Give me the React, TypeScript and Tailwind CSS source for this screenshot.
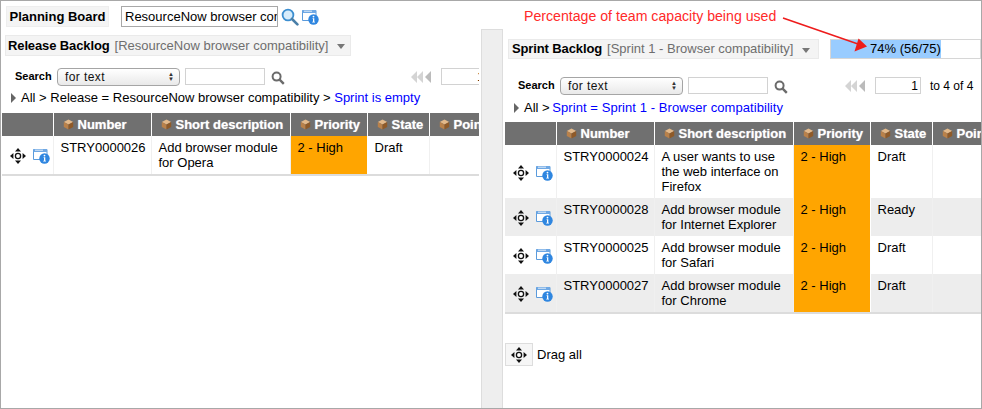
import React from "react";

const MoveIcon = ({ size = 16 }: { size?: number }) => (
  <svg width={size} height={size} viewBox="0 0 16 16" className="shrink-0">
    <circle cx="8" cy="8" r="2.6" fill="#fff" stroke="#111" strokeWidth="1.3" />
    <path d="M8 0 11 3.4H5Z M8 16 5 12.6H11Z M0 8 3.4 5V11Z M16 8 12.6 11V5Z" fill="#111" />
  </svg>
);

const InfoIcon = () => (
  <svg width="17" height="16" viewBox="0 0 17 16" className="shrink-0">
    <path d="M.5 1.5h13.5v10H.5Z" fill="#fff" stroke="#5b9bdc" />
    <path d="M.5 1h13.5v3H.5Z" fill="#6fa8e4" />
    <path d="M2 2.2h8" stroke="#fff" strokeWidth=".8" />
    <circle cx="11.5" cy="10.5" r="5.2" fill="#2f86e0" />
    <circle cx="11.5" cy="7.6" r=".9" fill="#fff" />
    <path d="M10.6 9.3h1.7v3.4h.7v.8h-2.8v-.8h.8v-2.6h-.4Z" fill="#fff" />
  </svg>
);

const Cube = () => (
  <svg width="11" height="11" viewBox="0 0 11 11" className="shrink-0">
    <path d="M5.5.5 10.2 3 5.5 5.5.8 3Z" fill="#e3b98a" />
    <path d="M.8 3 5.5 5.5V10.6L.8 8Z" fill="#b9814a" />
    <path d="M10.2 3 5.5 5.5V10.6L10.2 8Z" fill="#8f5a28" />
  </svg>
);

const GraySearch = () => (
  <svg width="14" height="14" viewBox="0 0 14 14" className="shrink-0">
    <circle cx="5.6" cy="5.6" r="4" fill="none" stroke="#6b6b6b" strokeWidth="2" />
    <path d="M8.6 8.6 12.8 12.8" stroke="#6b6b6b" strokeWidth="2.4" />
  </svg>
);

const BlueSearch = () => (
  <svg width="18" height="18" viewBox="0 0 18 18" className="shrink-0">
    <circle cx="7" cy="7" r="5.4" fill="#d6ecfb" stroke="#3b8ed0" strokeWidth="1.8" />
    <path d="M11 11 16.4 16.4" stroke="#4a7fa8" strokeWidth="2.6" strokeLinecap="round" />
  </svg>
);

const PagerArrows = () => (
  <svg width="20" height="12" viewBox="0 0 20 12" className="shrink-0">
    <path d="M6 0V12L0 6Z M12 0V12L6 6Z" fill="#d4d4d4" />
    <path d="M20 0V12L14 6Z" fill="#bbb" />
  </svg>
);

const SectionTitle = ({ name, context, className }: { name: string; context: string; className: string }) => (
  <div className={`flex items-center bg-[#f4f4f4] border border-[#eaeaea] text-[13px] whitespace-nowrap shrink-0 ${className}`}>
    <span className="font-bold text-black tracking-[-0.12px]">{name}</span>
    <span className="ml-[5px] text-[#6e6e6e]">{context}</span>
    <span className="ml-[9px] w-0 h-0 border-x-[4.5px] border-x-transparent border-t-[5px] border-t-[#777] mt-[2px]" />
  </div>
);

const SearchRow = ({ pagerGap, children }: { pagerGap: string; children?: React.ReactNode }) => (
  <div className="flex items-center h-[19px] whitespace-nowrap">
    <span className="w-[42px] shrink-0 text-[11px] font-bold text-black">Search</span>
    <div className="relative w-[123px] h-[18px] shrink-0 rounded-[4px] border border-[#a5a5a5] bg-gradient-to-b from-white to-[#e9e9e9] text-[12px] leading-[16px] pl-[7px] tracking-[0.4px] text-[#111]">
      for text
      <span className="absolute right-[5px] top-[3px] text-[6px] leading-[5px] text-[#333] flex flex-col tracking-normal">
        <span>▲</span>
        <span>▼</span>
      </span>
    </div>
    <div className="ml-[5px] w-[80px] h-[17px] shrink-0 bg-white border border-[#d2d2d2]" />
    <div className="ml-[6px] mt-[2px] flex shrink-0">
      <GraySearch />
    </div>
    <div className={`flex items-center shrink-0 ${pagerGap}`}>
      <PagerArrows />
    </div>
    <div className="ml-[10px] w-[46px] h-[17px] bg-white border border-[#d2d2d2] text-[12px] leading-[17px] text-right pr-[2px] shrink-0">
      1
    </div>
    {children}
  </div>
);

type Row = { number: string; description: string[]; state: string };

const Th = ({ label, width }: { label?: string; width: string }) => (
  <th className={`${width} h-[23px] p-0 bg-[#707070] border-r border-white text-left font-bold text-[13px] text-white align-middle`}>
    {label && (
      <div className="flex items-center pl-[9px] gap-[4px] whitespace-nowrap overflow-hidden [text-shadow:0_0_1px_#ffffffaa]">
        <Cube />
        {label}
      </div>
    )}
  </th>
);

const StoryTable = ({ rows }: { rows: Row[] }) => (
  <table className="table-fixed w-[560px] border-collapse border-b-2 border-[#dcdcdc] text-[13px] leading-[15px] text-black">
    <thead>
      <tr>
        <Th width="w-[51px]" />
        <Th width="w-[98px]" label="Number" />
        <Th width="w-[139px]" label="Short description" />
        <Th width="w-[77px]" label="Priority" />
        <Th width="w-[62px]" label="State" />
        <Th width="w-[133px]" label="Points" />
      </tr>
    </thead>
    <tbody>
      {rows.map((r, i) => (
        <tr key={r.number} className={i % 2 === 1 ? "bg-[#ededed]" : "bg-white"}>
          <td className="p-0 border-r border-[#f0f0f0] align-middle">
            <div className="flex items-center pl-[8px] gap-[7px] pt-[2px]">
              <MoveIcon />
              <InfoIcon />
            </div>
          </td>
          <td className="px-[7px] pt-[4px] pb-[4px] border-r border-[#f0f0f0] align-top">{r.number}</td>
          <td className="px-[7px] pt-[4px] pb-[4px] border-r border-[#f0f0f0] align-top">
            {r.description.map((line) => (
              <div key={line} className="whitespace-nowrap">
                {line}
              </div>
            ))}
          </td>
          <td className="px-[7px] pt-[4px] bg-[#ffa500] border-r border-white align-top">2 - High</td>
          <td className="px-[7px] pt-[4px] border-r border-[#f0f0f0] align-top">{r.state}</td>
          <td />
        </tr>
      ))}
    </tbody>
  </table>
);

const releaseRows: Row[] = [
  { number: "STRY0000026", description: ["Add browser module", "for Opera"], state: "Draft" },
];

const sprintRows: Row[] = [
  { number: "STRY0000024", description: ["A user wants to use", "the web interface on", "Firefox"], state: "Draft" },
  { number: "STRY0000028", description: ["Add browser module", "for Internet Explorer"], state: "Ready" },
  { number: "STRY0000025", description: ["Add browser module", "for Safari"], state: "Draft" },
  { number: "STRY0000027", description: ["Add browser module", "for Chrome"], state: "Draft" },
];

const Crumb = () => <span className="w-0 h-0 border-y-[5px] border-y-transparent border-l-[5px] border-l-[#666] mr-[5px] mt-[1px]" />;

export default function App() {
  return (
    <div className="relative w-[982px] h-[409px] flex flex-col bg-white border border-[#a8a8a8] overflow-hidden font-['Liberation_Sans',Arial,sans-serif] text-[13px] text-black">
      <header className="flex items-center h-[28px] pl-[5px] shrink-0 pt-[3px]">
        <div className="w-[103px] h-[21px] flex items-center justify-center bg-[#f4f4f4] border border-[#eeeeee] font-bold text-[13px]">
          Planning Board
        </div>
        <div className="ml-[12px] w-[157px] h-[21px] border border-[#a8a8a8] bg-white pl-[3px] text-[13px] leading-[19px] overflow-hidden whitespace-nowrap">
          ResourceNow browser compatibility
        </div>
        <div className="ml-[3px] flex items-center gap-[3px]">
          <BlueSearch />
          <InfoIcon />
        </div>
      </header>

      <div className="flex flex-1 min-h-0">
        <section className="w-[478px] mr-[2px] shrink-0 overflow-hidden flex flex-col">
          <div className="pl-[4px] pt-[6px]">
            <SectionTitle
              name="Release Backlog"
              context="[ResourceNow browser compatibility]"
              className="w-[346px] h-[21px] pl-[2px]"
            />
          </div>
          <div className="pl-[14px] pt-[11px]">
            <SearchRow pagerGap="ml-[126px]" />
          </div>
          <div className="flex items-center pl-[10px] mt-[2px] h-[19px] whitespace-nowrap">
            <Crumb />
            All &gt; Release = ResourceNow browser compatibility &gt;&nbsp;
            <span className="text-[#0000ff]">Sprint is empty</span>
          </div>
          <div className="mt-[6px] pl-[1px]">
            <StoryTable rows={releaseRows} />
          </div>
        </section>

        <div className="w-[22px] shrink-0 bg-[#eeeeee] border-x border-t border-[#dddddd]" />

        <section className="flex-1 min-w-0 overflow-hidden flex flex-col">
          <div className="flex items-center pl-[5px] pt-[10px]">
            <SectionTitle
              name="Sprint Backlog"
              context="[Sprint 1 - Browser compatibility]"
              className="w-[311px] h-[20px] pl-[3px]"
            />
            <div className="relative ml-[11px] w-[151px] h-[20px] border border-[#d6d6d6] bg-white shrink-0">
              <div className="absolute inset-y-0 left-0 w-[74%] bg-[#99ccff]" />
              <div className="relative text-center leading-[18px]">74% (56/75)</div>
            </div>
          </div>
          <div className="pl-[15px] pt-[17px]">
            <SearchRow pagerGap="ml-[57px]">
              <span className="ml-[9px] text-[12px]">to 4 of 4</span>
            </SearchRow>
          </div>
          <div className="flex items-center pl-[11px] mt-[3px] h-[19px] whitespace-nowrap">
            <Crumb />
            All &gt;&nbsp;
            <span className="-ml-[1px] text-[#0000ff] tracking-[0.07px]">Sprint = Sprint 1 - Browser compatibility</span>
          </div>
          <div className="mt-[5px] pl-[2px]">
            <StoryTable rows={sprintRows} />
          </div>
          <div className="flex items-center mt-[29px] pl-[2px]">
            <div className="w-[28px] h-[23px] flex items-center justify-center bg-[#f6f6f6] border border-[#dddddd]">
              <MoveIcon />
            </div>
            <span className="ml-[4px]">Drag all</span>
          </div>
        </section>
      </div>

      <span className="absolute left-[523px] top-[5px] text-[#ff2a2a] text-[14.15px] whitespace-nowrap">
        Percentage of team capacity being used
      </span>
      <svg className="absolute left-[777px] top-[13px]" width="96" height="40" viewBox="0 0 96 40">
        <path d="M5 4 80 30" stroke="#ee1c1c" strokeWidth="1.6" />
        <path d="M89 32.500 76.500 37.500 80.500 24.500Z" fill="#ee1c1c" />
      </svg>
    </div>
  );
}
